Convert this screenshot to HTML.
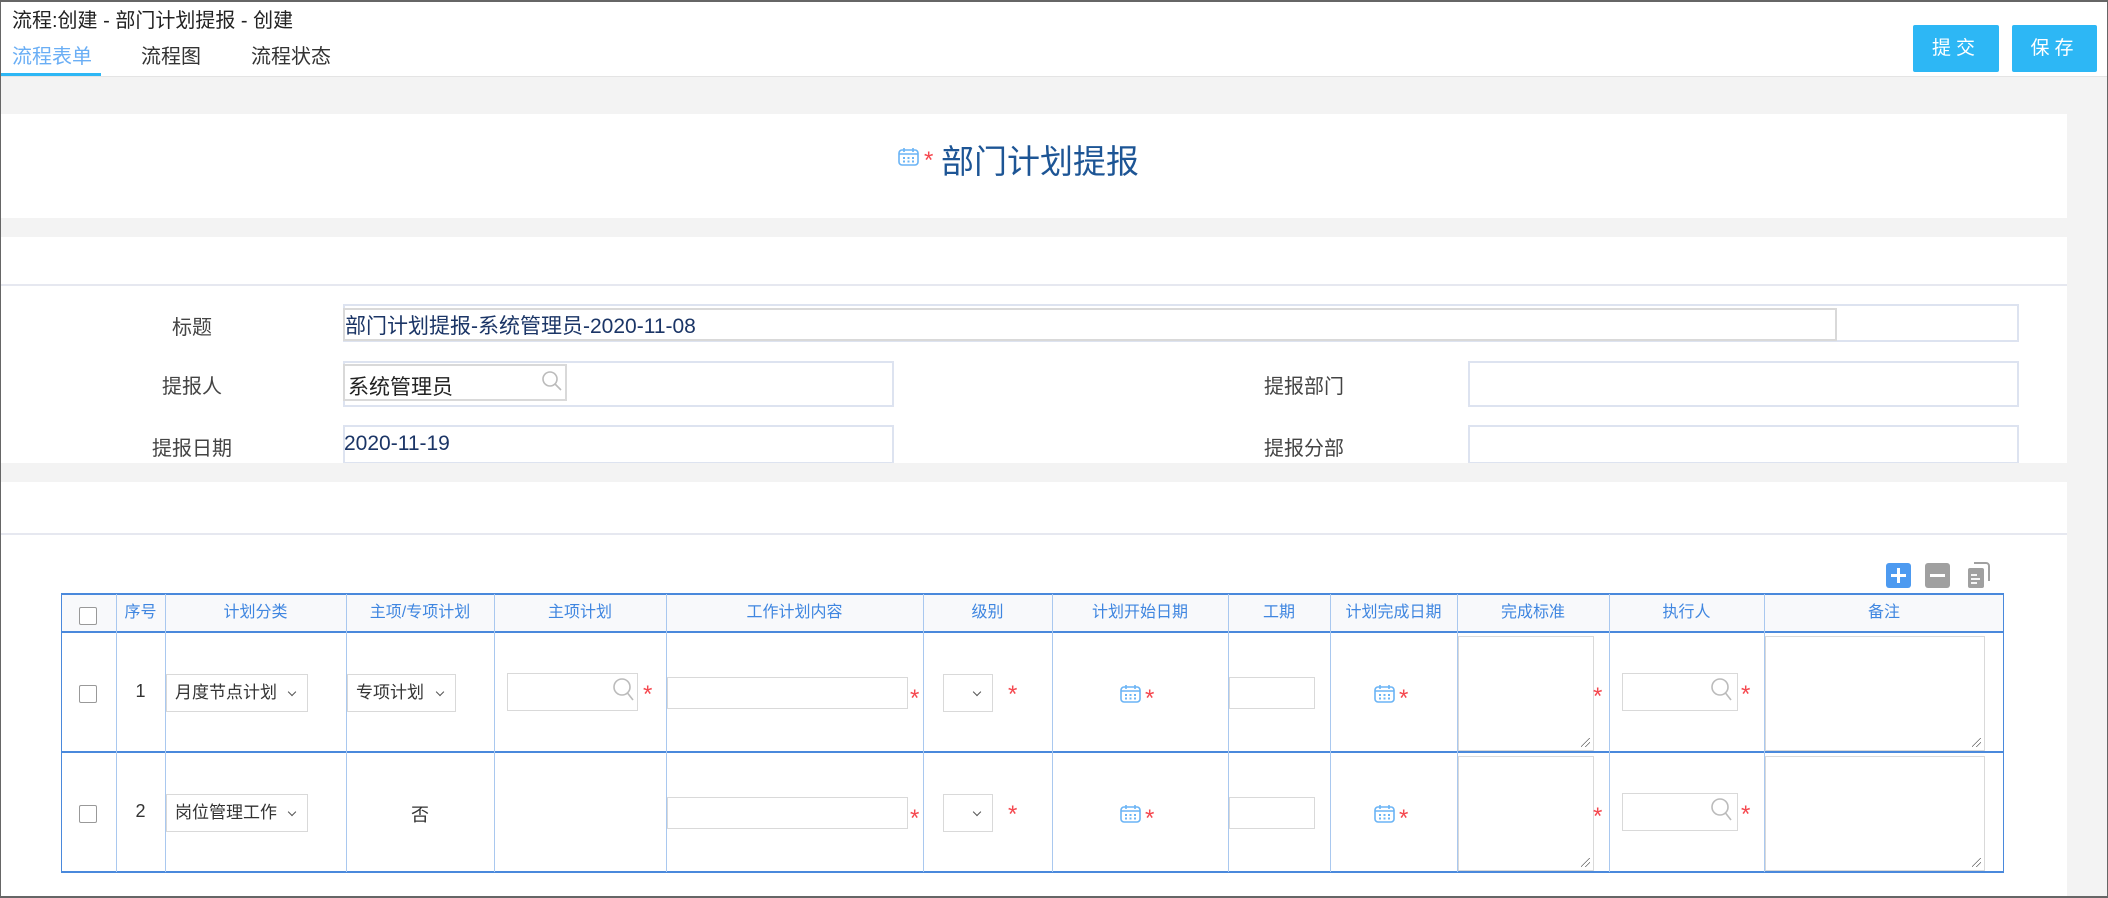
<!DOCTYPE html>
<html><head><meta charset="utf-8"><style>
*{box-sizing:border-box;margin:0;padding:0}
body{width:2108px;height:898px;position:relative;overflow:hidden;background:#fff;font-family:"Liberation Sans","Noto Sans CJK SC",sans-serif;color:#333}
.a{position:absolute}
.frame{left:0;top:0;width:2108px;height:898px;border:1px solid #666;border-top:2px solid #666;border-bottom:2px solid #666;z-index:50;pointer-events:none}
.btn{background:#2db7f5;color:#fff;font-size:19px;letter-spacing:5px;text-align:center;line-height:47px;border-radius:2px;height:47px;top:25px}
.lbl{font-size:20px;color:#444;text-align:center;width:200px}
.box{border:2px solid #dde3f0}
.inp{border:2px solid #d9d9d9;background:#fff}
.val{font-size:21px;color:#1b3566}
.star{color:#f5484f;font-size:24px;line-height:24px;font-family:"Liberation Sans",sans-serif}
.th{top:594px;height:38px;line-height:38px;text-align:center;font-size:16px;color:#3f86e0}
.vl{width:1px;background:#a9c8ef;top:594px;height:278px}
.hl{height:2px;background:#4a89dc;left:61px;width:1943px}
.cb{width:18px;height:18px;border:1px solid #999;border-radius:2px;background:#fff}
.sel{border:1px solid #d9d9d9;height:38px;font-size:17px;line-height:36px;padding-left:8px;color:#333;background:#fff}
.sel:after{content:"";position:absolute;right:12px;top:14px;width:5px;height:5px;border-right:1.5px solid #555;border-bottom:1.5px solid #555;transform:rotate(45deg)}
.ta{border:2px solid #d9d9d9;background:#fff}
.ta:after{content:"";position:absolute;right:3px;bottom:3px;width:9px;height:9px;background:linear-gradient(135deg,transparent 45%,#666 45%,#666 52%,transparent 52%,transparent 70%,#666 70%,#666 77%,transparent 77%)}
</style></head><body>
<div class="a frame"></div>
<div class="a" style="left:12px;top:4px;font-size:20px;color:#222">流程:创建 - 部门计划提报 - 创建</div>
<div class="a" style="left:12px;top:40px;font-size:20px;color:#6aaef5">流程表单</div>
<div class="a" style="left:141px;top:40px;font-size:20px;color:#333">流程图</div>
<div class="a" style="left:251px;top:40px;font-size:20px;color:#333">流程状态</div>
<div class="a" style="left:0;top:73px;width:101px;height:3px;background:#2db7f5"></div>
<div class="a btn" style="left:1913px;width:86px">提交</div>
<div class="a btn" style="left:2012px;width:85px">保存</div>
<div class="a" style="left:0;top:76px;width:2108px;height:822px;background:#f3f3f3;border-top:1px solid #e4e4e4"></div>
<div class="a" style="left:0;top:114px;width:2067px;height:104px;background:#fff"></div>
<div class="a" style="left:0;top:237px;width:2067px;height:226px;background:#fff"></div>
<div class="a" style="left:0;top:284px;width:2067px;height:2px;background:#e6e8f0"></div>
<div class="a" style="left:0;top:482px;width:2067px;height:416px;background:#fff"></div>
<div class="a" style="left:0;top:533px;width:2067px;height:2px;background:#e6e8f0"></div>
<svg class="a" style="left:898px;top:147px" width="21" height="19" viewBox="0 0 21 19"><rect x="1" y="3" width="19" height="15" rx="3" fill="none" stroke="#6ab4f5" stroke-width="1.6"/><line x1="1" y1="7" x2="20" y2="7" stroke="#6ab4f5" stroke-width="1.4"/><line x1="6" y1="1" x2="6" y2="5" stroke="#6ab4f5" stroke-width="1.6"/><line x1="15" y1="1" x2="15" y2="5" stroke="#6ab4f5" stroke-width="1.6"/><g fill="#6ab4f5"><rect x="5" y="10" width="2" height="2"/><rect x="9.5" y="10" width="2" height="2"/><rect x="14" y="10" width="2" height="2"/><rect x="5" y="13.5" width="2" height="2"/><rect x="9.5" y="13.5" width="2" height="2"/><rect x="14" y="13.5" width="2" height="2"/></g></svg>
<div class="a star" style="left:924px;top:149px">*</div>
<div class="a" style="left:941px;top:135px;font-size:33px;color:#1d5595">部门计划提报</div>
<div class="a lbl" style="left:92px;top:311px">标题</div>
<div class="a box" style="left:343px;top:304px;width:1676px;height:38px"></div>
<div class="a inp" style="left:343px;top:308px;width:1494px;height:33px"></div>
<div class="a val" style="left:345px;top:310px">部门计划提报-系统管理员-2020-11-08</div>
<div class="a lbl" style="left:92px;top:370px">提报人</div>
<div class="a box" style="left:343px;top:361px;width:551px;height:46px"></div>
<div class="a inp" style="left:343px;top:364px;width:224px;height:37px"></div>
<div class="a val" style="left:348px;top:371px;color:#222">系统管理员</div>
<svg class="a" style="left:540px;top:369px" width="24" height="24" viewBox="0 0 24 24"><circle cx="10" cy="10" r="7" fill="none" stroke="#bbb" stroke-width="1.6"/><line x1="15" y1="15" x2="21" y2="21" stroke="#bbb" stroke-width="1.6"/></svg>
<div class="a lbl" style="left:1204px;top:370px">提报部门</div>
<div class="a box" style="left:1468px;top:361px;width:551px;height:46px"></div>
<div class="a lbl" style="left:92px;top:432px">提报日期</div>
<div class="a box" style="left:343px;top:425px;width:551px;height:39px"></div>
<div class="a val" style="left:344px;top:432px">2020-11-19</div>
<div class="a lbl" style="left:1204px;top:432px">提报分部</div>
<div class="a box" style="left:1468px;top:425px;width:551px;height:39px"></div>
<div class="a" style="left:0;top:463px;width:2067px;height:19px;background:#f3f3f3"></div>
<div class="a" style="left:1886px;top:563px;width:25px;height:25px;background:#4d9af0;border-radius:3px"><div class="a" style="left:5px;top:11px;width:15px;height:3px;background:#fff"></div><div class="a" style="left:11px;top:5px;width:3px;height:15px;background:#fff"></div></div>
<div class="a" style="left:1925px;top:563px;width:25px;height:25px;background:#a0a0a0;border-radius:3px"><div class="a" style="left:5px;top:11px;width:15px;height:3px;background:#fff"></div></div>
<svg class="a" style="left:1966px;top:562px" width="26" height="27" viewBox="0 0 26 27"><path d="M8 1h12a3 3 0 0 1 3 3v15" fill="none" stroke="#a0a0a0" stroke-width="2"/><rect x="2" y="6" width="16" height="20" rx="2" fill="#a0a0a0"/><g stroke="#fff" stroke-width="1.8"><line x1="5" y1="13" x2="11" y2="13"/><line x1="5" y1="17" x2="14" y2="17"/><line x1="5" y1="21" x2="11" y2="21"/></g></svg>
<div class="a" style="left:61px;top:594px;width:1943px;height:38px;background:#f8f9fb"></div>
<div class="a" style="left:61px;top:593px;width:1943px;height:280px;border:1px solid #4a89dc;border-top:2px solid #4a89dc;border-bottom:2px solid #4a89dc"></div>
<div class="a hl" style="top:631px"></div>
<div class="a hl" style="top:751px"></div>
<div class="a vl" style="left:116px"></div><div class="a vl" style="left:165px"></div><div class="a vl" style="left:346px"></div><div class="a vl" style="left:494px"></div><div class="a vl" style="left:666px"></div><div class="a vl" style="left:923px"></div><div class="a vl" style="left:1052px"></div><div class="a vl" style="left:1228px"></div><div class="a vl" style="left:1330px"></div><div class="a vl" style="left:1457px"></div><div class="a vl" style="left:1609px"></div><div class="a vl" style="left:1764px"></div>
<div class="a cb" style="left:79px;top:607px"></div>
<div class="a th" style="left:116px;width:49px">序号</div>
<div class="a th" style="left:165px;width:181px">计划分类</div>
<div class="a th" style="left:346px;width:148px">主项/专项计划</div>
<div class="a th" style="left:494px;width:172px">主项计划</div>
<div class="a th" style="left:666px;width:257px">工作计划内容</div>
<div class="a th" style="left:923px;width:129px">级别</div>
<div class="a th" style="left:1052px;width:176px">计划开始日期</div>
<div class="a th" style="left:1228px;width:102px">工期</div>
<div class="a th" style="left:1330px;width:127px">计划完成日期</div>
<div class="a th" style="left:1457px;width:152px">完成标准</div>
<div class="a th" style="left:1609px;width:155px">执行人</div>
<div class="a th" style="left:1764px;width:240px">备注</div>

<div class="a cb" style="left:79px;top:685px"></div>
<div class="a" style="left:116px;top:681px;width:49px;text-align:center;font-size:18px">1</div>
<div class="a sel" style="left:166px;top:674px;width:142px">月度节点计划</div>
<div class="a sel" style="left:347px;top:674px;width:109px">专项计划</div>
<div class="a inp" style="left:507px;top:673px;width:131px;height:38px;border-width:1px"></div>
<svg class="a" style="left:612px;top:677px" width="24" height="28" viewBox="0 0 24 28"><circle cx="10" cy="10" r="8" fill="none" stroke="#bbb" stroke-width="1.6"/><line x1="15.5" y1="16" x2="21" y2="23" stroke="#bbb" stroke-width="1.6"/></svg>
<div class="a star" style="left:643px;top:683px">*</div>
<div class="a inp" style="left:667px;top:677px;width:241px;height:32px;border-width:1px"></div>
<div class="a star" style="left:910px;top:687px">*</div>
<div class="a sel" style="left:943px;top:674px;width:50px"></div>
<div class="a star" style="left:1008px;top:683px">*</div>
<svg class="a" style="left:1120px;top:684px" width="21" height="19" viewBox="0 0 21 19"><rect x="1" y="3" width="19" height="15" rx="3" fill="none" stroke="#6ab4f5" stroke-width="1.6"/><line x1="1" y1="7" x2="20" y2="7" stroke="#6ab4f5" stroke-width="1.4"/><line x1="6" y1="1" x2="6" y2="5" stroke="#6ab4f5" stroke-width="1.6"/><line x1="15" y1="1" x2="15" y2="5" stroke="#6ab4f5" stroke-width="1.6"/><g fill="#6ab4f5"><rect x="5" y="10" width="2" height="2"/><rect x="9.5" y="10" width="2" height="2"/><rect x="14" y="10" width="2" height="2"/><rect x="5" y="13.5" width="2" height="2"/><rect x="9.5" y="13.5" width="2" height="2"/><rect x="14" y="13.5" width="2" height="2"/></g></svg>
<div class="a star" style="left:1145px;top:687px">*</div>
<div class="a inp" style="left:1229px;top:677px;width:86px;height:32px;border-width:1px"></div>
<svg class="a" style="left:1374px;top:684px" width="21" height="19" viewBox="0 0 21 19"><rect x="1" y="3" width="19" height="15" rx="3" fill="none" stroke="#6ab4f5" stroke-width="1.6"/><line x1="1" y1="7" x2="20" y2="7" stroke="#6ab4f5" stroke-width="1.4"/><line x1="6" y1="1" x2="6" y2="5" stroke="#6ab4f5" stroke-width="1.6"/><line x1="15" y1="1" x2="15" y2="5" stroke="#6ab4f5" stroke-width="1.6"/><g fill="#6ab4f5"><rect x="5" y="10" width="2" height="2"/><rect x="9.5" y="10" width="2" height="2"/><rect x="14" y="10" width="2" height="2"/><rect x="5" y="13.5" width="2" height="2"/><rect x="9.5" y="13.5" width="2" height="2"/><rect x="14" y="13.5" width="2" height="2"/></g></svg>
<div class="a star" style="left:1399px;top:687px">*</div>
<div class="a ta" style="left:1458px;top:636px;width:136px;height:115px;border-width:1px"></div>
<div class="a star" style="left:1593px;top:685px">*</div>
<div class="a inp" style="left:1622px;top:673px;width:116px;height:38px;border-width:1px"></div>
<svg class="a" style="left:1710px;top:677px" width="24" height="28" viewBox="0 0 24 28"><circle cx="10" cy="10" r="8" fill="none" stroke="#bbb" stroke-width="1.6"/><line x1="15.5" y1="16" x2="21" y2="23" stroke="#bbb" stroke-width="1.6"/></svg>
<div class="a star" style="left:1741px;top:683px">*</div>
<div class="a ta" style="left:1765px;top:636px;width:220px;height:115px;border-width:1px"></div>

<div class="a cb" style="left:79px;top:805px"></div>
<div class="a" style="left:116px;top:801px;width:49px;text-align:center;font-size:18px">2</div>
<div class="a sel" style="left:166px;top:794px;width:142px">岗位管理工作</div>
<div class="a" style="left:346px;top:801px;width:148px;text-align:center;font-size:18px">否</div>
<div class="a inp" style="left:667px;top:797px;width:241px;height:32px;border-width:1px"></div>
<div class="a star" style="left:910px;top:807px">*</div>
<div class="a sel" style="left:943px;top:794px;width:50px"></div>
<div class="a star" style="left:1008px;top:803px">*</div>
<svg class="a" style="left:1120px;top:804px" width="21" height="19" viewBox="0 0 21 19"><rect x="1" y="3" width="19" height="15" rx="3" fill="none" stroke="#6ab4f5" stroke-width="1.6"/><line x1="1" y1="7" x2="20" y2="7" stroke="#6ab4f5" stroke-width="1.4"/><line x1="6" y1="1" x2="6" y2="5" stroke="#6ab4f5" stroke-width="1.6"/><line x1="15" y1="1" x2="15" y2="5" stroke="#6ab4f5" stroke-width="1.6"/><g fill="#6ab4f5"><rect x="5" y="10" width="2" height="2"/><rect x="9.5" y="10" width="2" height="2"/><rect x="14" y="10" width="2" height="2"/><rect x="5" y="13.5" width="2" height="2"/><rect x="9.5" y="13.5" width="2" height="2"/><rect x="14" y="13.5" width="2" height="2"/></g></svg>
<div class="a star" style="left:1145px;top:807px">*</div>
<div class="a inp" style="left:1229px;top:797px;width:86px;height:32px;border-width:1px"></div>
<svg class="a" style="left:1374px;top:804px" width="21" height="19" viewBox="0 0 21 19"><rect x="1" y="3" width="19" height="15" rx="3" fill="none" stroke="#6ab4f5" stroke-width="1.6"/><line x1="1" y1="7" x2="20" y2="7" stroke="#6ab4f5" stroke-width="1.4"/><line x1="6" y1="1" x2="6" y2="5" stroke="#6ab4f5" stroke-width="1.6"/><line x1="15" y1="1" x2="15" y2="5" stroke="#6ab4f5" stroke-width="1.6"/><g fill="#6ab4f5"><rect x="5" y="10" width="2" height="2"/><rect x="9.5" y="10" width="2" height="2"/><rect x="14" y="10" width="2" height="2"/><rect x="5" y="13.5" width="2" height="2"/><rect x="9.5" y="13.5" width="2" height="2"/><rect x="14" y="13.5" width="2" height="2"/></g></svg>
<div class="a star" style="left:1399px;top:807px">*</div>
<div class="a ta" style="left:1458px;top:756px;width:136px;height:115px;border-width:1px"></div>
<div class="a star" style="left:1593px;top:805px">*</div>
<div class="a inp" style="left:1622px;top:793px;width:116px;height:38px;border-width:1px"></div>
<svg class="a" style="left:1710px;top:797px" width="24" height="28" viewBox="0 0 24 28"><circle cx="10" cy="10" r="8" fill="none" stroke="#bbb" stroke-width="1.6"/><line x1="15.5" y1="16" x2="21" y2="23" stroke="#bbb" stroke-width="1.6"/></svg>
<div class="a star" style="left:1741px;top:803px">*</div>
<div class="a ta" style="left:1765px;top:756px;width:220px;height:115px;border-width:1px"></div>
</body></html>
